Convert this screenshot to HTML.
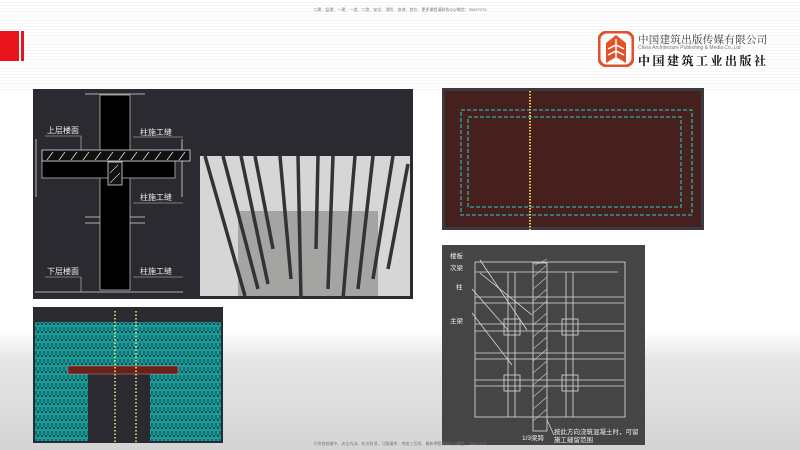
<!DOCTYPE html>
<html><head><meta charset="utf-8"><style>
body{margin:0;width:800px;height:450px;overflow:hidden;position:relative;font-family:"Liberation Sans","Noto Sans CJK SC",sans-serif;
background:linear-gradient(#fff 0,#fff 330px,#e6e6e6 360px,#d4d4d4 450px);}
.abs{position:absolute}
</style></head><body>
<div class="abs" style="left:0;top:0;width:800px;height:90px;background:repeating-linear-gradient(#fff 0 2px,#f3f3f3 2px 3px);opacity:.7"></div>
<div class="abs" style="left:0;top:7px;width:800px;text-align:center;font-size:4px;color:#777">二建、监理、一建、一造、二造、安全、消防、咨询、造价、更多课程请联系QQ/微信：35497376</div>
<div class="abs" style="left:0;top:31px;width:19px;height:30px;background:#e8141b"></div>
<div class="abs" style="left:21px;top:31px;width:3px;height:30px;background:#e8141b"></div>
<svg class="abs" style="left:598px;top:31px" width="36" height="36" viewBox="0 0 36 36">
<rect x="1" y="1" width="34" height="34" rx="8" fill="none" stroke="#e0522a" stroke-width="3"/>
<path d="M18 4 L8 12 L8 32 L18 26 L28 32 L28 12Z" fill="#e0522a"/>
<path d="M18 8 V30 M10 18 L18 14 L26 18 M10 24 L18 20 L26 24" stroke="#fff" stroke-width="1.5" fill="none"/>
</svg>
<div class="abs" style="left:638px;top:32px;font-size:10.5px;color:#333;font-family:'Liberation Serif','Noto Serif CJK SC',serif;letter-spacing:.3px">中国建筑出版传媒有限公司</div>
<div class="abs" style="left:638px;top:45px;font-size:5px;color:#777">China Architecture Publishing &amp; Media Co.,Ltd</div>
<div class="abs" style="left:638px;top:52px;font-size:12px;color:#111;font-weight:bold;letter-spacing:2.5px;font-family:'Noto Serif CJK SC',serif">中国建筑工业出版社</div>

<!-- Panel A -->
<svg class="abs" style="left:33px;top:89px" width="380" height="210" viewBox="0 0 380 210">
<rect width="380" height="210" fill="#2b2a30"/>
<g stroke="#ddd" fill="none" stroke-width="0.8">
<line x1="52" y1="5" x2="112" y2="5"/><line x1="2" y1="203" x2="150" y2="203"/>
<line x1="52" y1="128" x2="112" y2="128"/><line x1="52" y1="134" x2="112" y2="134"/>
<line x1="3" y1="50" x2="3" y2="108"/><line x1="149" y1="50" x2="149" y2="108"/>
</g>
<rect x="67" y="6" width="30" height="195" fill="#000" stroke="#ccc" stroke-width="0.7"/>
<rect x="9" y="72" width="133" height="17" fill="#000" stroke="#ccc" stroke-width="0.7"/>
<rect x="9" y="61" width="148" height="11" fill="#111" stroke="#ddd" stroke-width="0.8"/>
<path d="M14 71 l6 -8 M26 71 l6 -8 M38 71 l6 -8 M50 71 l6 -8 M62 71 l6 -8 M74 71 l6 -8 M86 71 l6 -8 M98 71 l6 -8 M110 71 l6 -8 M122 71 l6 -8 M134 71 l6 -8 M146 71 l6 -8" stroke="#ddd" stroke-width="0.8"/>
<rect x="75" y="73" width="14" height="23" fill="#111" stroke="#ddd" stroke-width="0.8"/>
<path d="M77 94 l10 -10 M77 84 l8 -8" stroke="#ddd" stroke-width="0.6"/>
<g font-size="8" fill="#eee"><text x="14" y="44">上层楼面</text><text x="107" y="46">柱施工缝</text><text x="107" y="111">柱施工缝</text><text x="14" y="185">下层楼面</text><text x="107" y="185">柱施工缝</text></g>
<g stroke="#ccc" stroke-width="0.6"><line x1="100" y1="48" x2="150" y2="48"/><line x1="100" y1="114" x2="150" y2="114"/><line x1="100" y1="188" x2="150" y2="188"/><line x1="12" y1="47" x2="48" y2="47"/><line x1="12" y1="188" x2="48" y2="188"/><line x1="48" y1="47" x2="48" y2="61"/><line x1="48" y1="188" x2="48" y2="203"/></g>
<rect x="167" y="67" width="210" height="140" fill="#d6d6d6"/>
<rect x="205" y="122" width="140" height="85" fill="#a4a4a2"/>
<g stroke="#333" stroke-width="3.5">
<line x1="172" y1="67" x2="212" y2="207"/><line x1="190" y1="67" x2="225" y2="200"/><line x1="208" y1="67" x2="235" y2="195"/><line x1="222" y1="67" x2="240" y2="160"/><line x1="247" y1="67" x2="258" y2="190"/><line x1="265" y1="67" x2="268" y2="210"/><line x1="285" y1="67" x2="283" y2="160"/><line x1="300" y1="67" x2="295" y2="200"/><line x1="322" y1="67" x2="310" y2="210"/><line x1="340" y1="67" x2="325" y2="200"/><line x1="360" y1="67" x2="340" y2="190"/><line x1="375" y1="75" x2="355" y2="180"/>
</g>
</svg>

<!-- Panel B -->
<svg class="abs" style="left:442px;top:88px" width="262" height="142" viewBox="0 0 262 142">
<rect width="262" height="142" fill="#3a3a40"/><rect x="3" y="3" width="256" height="136" fill="#45201c"/>
<g fill="none" stroke="#3aa" stroke-width="1.3" stroke-dasharray="4 2"><rect x="19" y="22" width="231" height="105"/><rect x="26" y="29" width="213" height="90"/></g>
<line x1="88" y1="3" x2="88" y2="142" stroke="#e6c25a" stroke-width="2" stroke-dasharray="1.5 1.5"/>
</svg>

<!-- Panel C -->
<svg class="abs" style="left:442px;top:245px" width="203" height="200" viewBox="0 0 203 200">
<rect width="203" height="200" fill="#454545"/>
<g fill="none" stroke="#ddd" stroke-width="0.8">
<rect x="33" y="17" width="150" height="155"/>
<line x1="33" y1="27" x2="176" y2="27"/><line x1="33" y1="52" x2="182" y2="52"/><line x1="33" y1="58" x2="182" y2="58"/>
<line x1="33" y1="79" x2="182" y2="79"/><line x1="33" y1="86" x2="182" y2="86"/><line x1="33" y1="108" x2="182" y2="108"/>
<line x1="33" y1="114" x2="182" y2="114"/><line x1="33" y1="135" x2="182" y2="135"/><line x1="33" y1="141" x2="182" y2="141"/>
<line x1="66" y1="27" x2="66" y2="172"/><line x1="73" y1="27" x2="73" y2="172"/><line x1="124" y1="27" x2="124" y2="172"/><line x1="131" y1="27" x2="131" y2="172"/>
<rect x="62" y="74" width="16" height="16"/><rect x="120" y="74" width="16" height="16"/><rect x="62" y="130" width="16" height="16"/><rect x="120" y="130" width="16" height="16"/>
<rect x="91" y="18" width="14" height="168"/>
<line x1="38" y1="15" x2="85" y2="85"/><line x1="38" y1="28" x2="90" y2="70"/><line x1="30" y1="44" x2="66" y2="85"/><line x1="30" y1="68" x2="70" y2="120"/><line x1="105" y1="175" x2="112" y2="190"/>
</g>
<path d="M93 20 l12 -6 M91 32 l14 -12 M91 44 l14 -12 M91 56 l14 -12 M91 68 l14 -12 M91 80 l14 -12 M91 92 l14 -12 M91 104 l14 -12 M91 116 l14 -12 M91 128 l14 -12 M91 140 l14 -12 M91 152 l14 -12 M91 164 l14 -12 M91 176 l14 -12" stroke="#ccc" stroke-width="0.6"/>
<g font-size="6.5" fill="#eee"><text x="8" y="13">楼板</text><text x="8" y="25">次梁</text><text x="14" y="44">柱</text><text x="8" y="78">主梁</text><text x="112" y="189">按此方向浇筑混凝土时，可留</text><text x="112" y="197">施工缝留范围</text><text x="80" y="195">1/3梁跨</text></g>
</svg>

<!-- Panel D -->
<svg class="abs" style="left:33px;top:307px" width="190" height="136" viewBox="0 0 190 136">
<defs><pattern id="p" width="4" height="8" patternUnits="userSpaceOnUse"><rect width="4" height="8" fill="#1a9a98"/><rect width="2" height="2" fill="#0b4a4a"/><rect x="2" y="4" width="2" height="4" fill="#127070"/></pattern></defs>
<rect width="190" height="136" fill="#2a2a30"/>
<rect x="2" y="15" width="186" height="119" fill="url(#p)"/>
<rect x="55" y="66" width="62" height="70" fill="#2a2a30"/>
<rect x="35" y="59" width="110" height="8" fill="#6a2218" stroke="#c89" stroke-width="0.5"/>
<g stroke="#e6e07a" stroke-width="1.6" stroke-dasharray="1.5 2"><line x1="82" y1="4" x2="82" y2="136"/><line x1="103" y1="4" x2="103" y2="136"/></g>
</svg>
<div class="abs" style="left:0;top:441px;width:800px;text-align:center;font-size:4px;color:#777">七师良结婚中、夫企内训、补点班讲、习题填考、考前三页纸、最新押题资料QQ/微信：35497376</div>
</body></html>
